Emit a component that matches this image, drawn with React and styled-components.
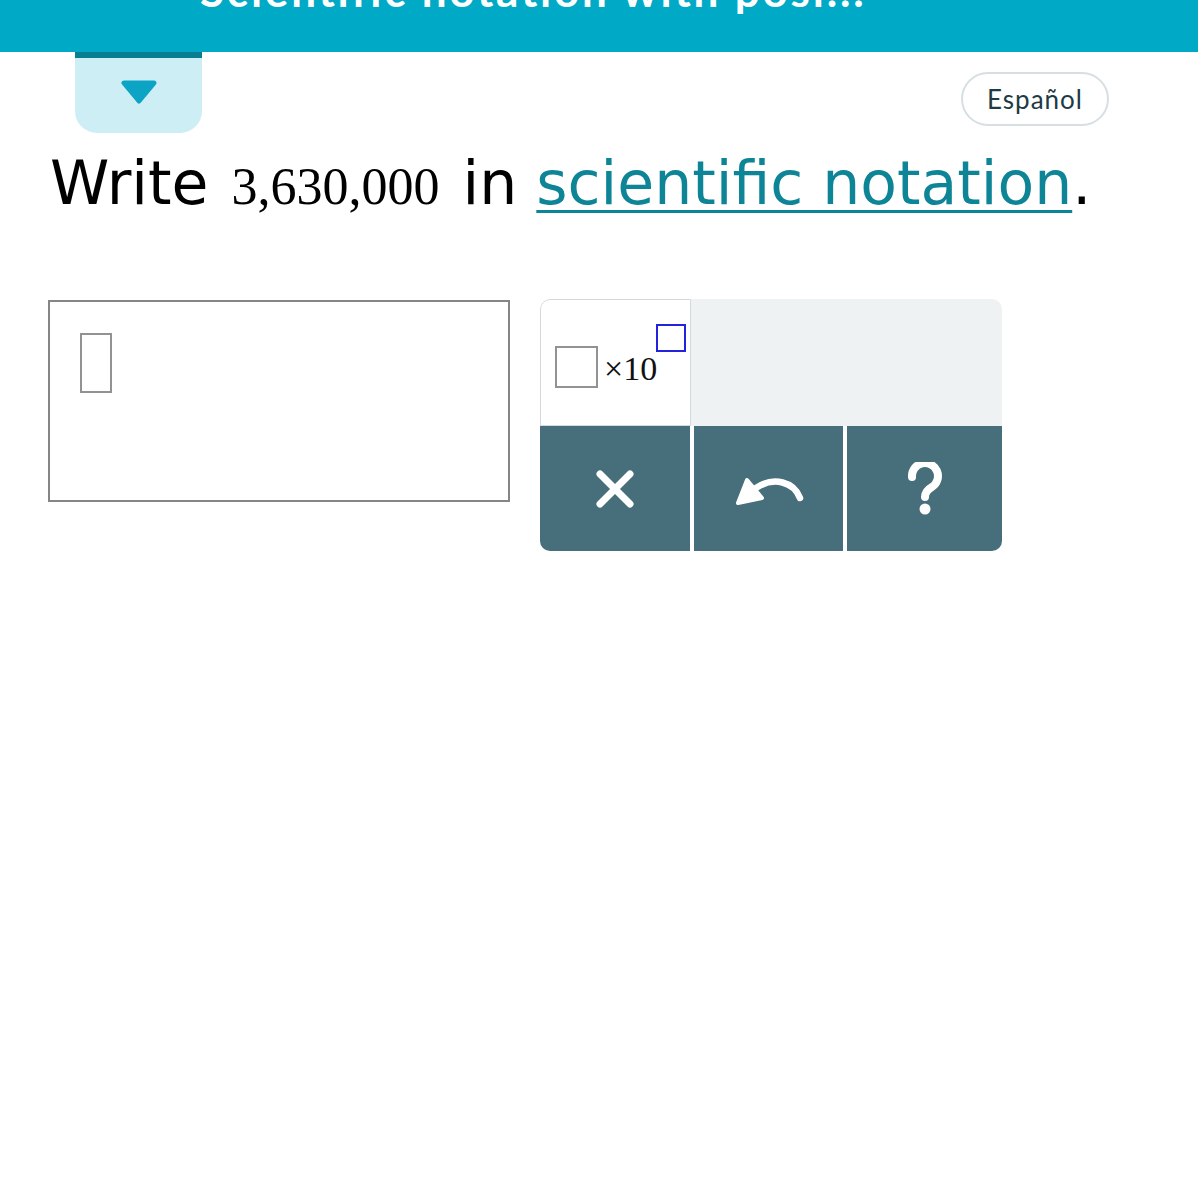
import React from 'react'
import styled, { createGlobalStyle } from 'styled-components';

const Global = createGlobalStyle`
body {
  margin: 0;
  background: #fff;
  font-family: "Lato", "Noto Sans", sans-serif;
}
`;

const Header = styled.header`
height: 52px;
background-color: #00aac7;
overflow: hidden;
`;

const HeaderTitle = styled.h1`
margin: -32px 0 0 200px;
font-size: 44px;
line-height: 44px;
font-weight: 700;
letter-spacing: 2.8px;
color: #fff;
white-space: nowrap;
`;

const TopRow = styled.div`
display: flex;
justify-content: space-between;
align-items: flex-start;
padding: 0 89px 0 75px;
`;

const Tab = styled.button`
width: 127px;
height: 81px;
border: none;
border-top: 6px solid #0b7d91;
border-radius: 0 0 22px 22px;
background-color: #cdeef4;
display: flex;
align-items: center;
justify-content: center;
padding: 0 0 8px;
cursor: pointer;
`;

const LangButton = styled.button`
margin-top: 20px;
height: 54px;
padding: 0 24px;
border: 2px solid #d6dfe2;
border-radius: 27px;
background: #fff;
font-family: "Lato", sans-serif;
font-size: 26px;
letter-spacing: 1px;
color: #1d3b45;
cursor: pointer;
`;

const Question = styled.p`
margin: 14px 0 0 50px;
font-family: "DejaVu Sans", sans-serif;
font-size: 60px;
line-height: 72px;
color: #000;
white-space: nowrap;
`;

const MathNum = styled.span`
font-family: "Liberation Serif", serif;
font-size: 52px;
margin: 0 4px;
`;

const TermLink = styled.a`
color: #0d8597;
text-decoration: underline;
text-decoration-thickness: 3px;
text-underline-offset: 6px;
`;

const Work = styled.div`
display: flex;
align-items: flex-start;
gap: 30px;
margin: 77px 0 0 48px;
`;

const AnswerBox = styled.div`
box-sizing: border-box;
width: 462px;
height: 202px;
border: 2px solid #858585;
padding: 31px 0 0 30px;
`;

const Slot = styled.div`
box-sizing: border-box;
width: ${(p) => p.w}px;
height: ${(p) => p.h}px;
border: 2px solid ${(p) => (p.active ? '#2323dd' : '#929292')};
background: #fff;
`;

const Keypad = styled.div`
width: 462px;
border-radius: 10px;
overflow: hidden;
background: #eff2f3;
margin-top: -1px;
`;

const TemplateRow = styled.div`
height: 127px;
display: flex;
`;

const TemplateKey = styled.button`
box-sizing: border-box;
width: 151px;
height: 127px;
background: #fff;
border: 1px solid #d2dadd;
border-top-left-radius: 10px;
display: flex;
align-items: center;
padding: 0 0 0 14px;
cursor: pointer;
`;

const Expr = styled.span`
display: flex;
align-items: flex-end;
margin-top: 8px;
`;

const Times = styled.span`
font-family: "Liberation Serif", serif;
font-size: 34px;
line-height: 34px;
color: #111;
margin: 0 0 2px 6px;
`;

const Power = styled.span`
align-self: flex-start;
margin: -22px 0 0 -1px;
`;

const ActionRow = styled.div`
display: grid;
grid-template-columns: 150px 149px 155px;
gap: 4px;
background: #fff;
`;

const ActionKey = styled.button`
height: 125px;
border: none;
background: #476e7b;
display: flex;
align-items: center;
justify-content: center;
cursor: pointer;
`;

function Caret() {
    return (
        <svg width="40" height="24" viewBox="0 0 40 24">
            <path d="M5 3 L35 3 L20 21 Z" fill="#0ba4c4" stroke="#0ba4c4" strokeWidth="5" strokeLinejoin="round" />
        </svg>
    )
}

function ClearIcon() {
    return (
        <svg width="40" height="40" viewBox="0 0 40 40">
            <path d="M5 5 L35 35 M35 5 L5 35" stroke="#fff" strokeWidth="7" strokeLinecap="round" />
        </svg>
    )
}

function UndoIcon() {
    return (
        <svg width="70" height="34" viewBox="0 0 70 34">
            <path d="M66 26 C60 10 40 4 22 16" fill="none" stroke="#fff" strokeWidth="6.5" strokeLinecap="round" />
            <path d="M4 31 L13 8 L28 26 Z" fill="#fff" stroke="#fff" strokeWidth="4" strokeLinejoin="round" />
        </svg>
    )
}

function HelpIcon() {
    return (
        <svg width="40" height="54" viewBox="0 0 40 54">
            <path d="M7 15 A13 13 0 1 1 27 25 Q20 29 20 35" fill="none" stroke="#fff" strokeWidth="8" strokeLinecap="round" />
            <circle cx="20" cy="47" r="5.5" fill="#fff" />
        </svg>
    )
}

function App() {
    return (
        <>
            <Global />
            <Header>
                <HeaderTitle>Scientific notation with posi...</HeaderTitle>
            </Header>
            <TopRow>
                <Tab><Caret /></Tab>
                <LangButton>Español</LangButton>
            </TopRow>
            <Question>
                Write <MathNum>3,630,000</MathNum> in <TermLink>scientific notation</TermLink>.
            </Question>
            <Work>
                <AnswerBox>
                    <Slot w={32} h={60} />
                </AnswerBox>
                <Keypad>
                    <TemplateRow>
                        <TemplateKey>
                            <Expr>
                                <Slot w={43} h={42} />
                                <Times>×10</Times>
                                <Power><Slot w={30} h={28} active /></Power>
                            </Expr>
                        </TemplateKey>
                    </TemplateRow>
                    <ActionRow>
                        <ActionKey><ClearIcon /></ActionKey>
                        <ActionKey><UndoIcon /></ActionKey>
                        <ActionKey><HelpIcon /></ActionKey>
                    </ActionRow>
                </Keypad>
            </Work>
        </>
    )
}

export default App
